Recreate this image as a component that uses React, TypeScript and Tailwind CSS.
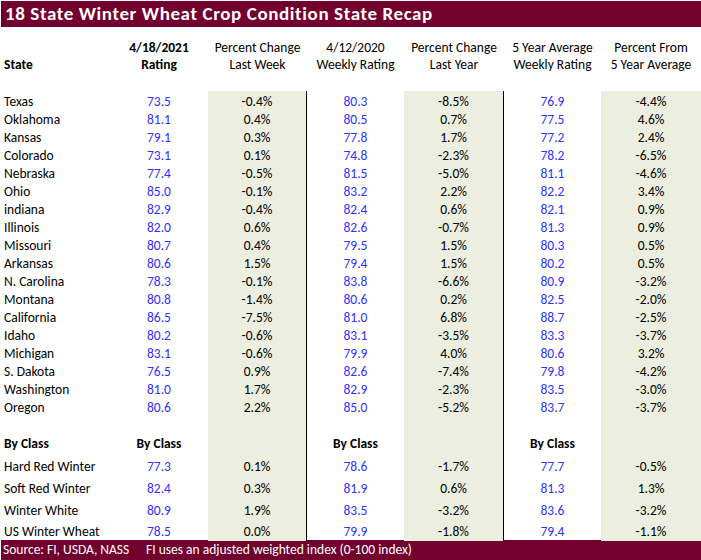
import React from "react";

const FONT = { fontFamily: "Carlito, Calibri, Lato, 'Liberation Sans', sans-serif" };

type Row = [string, string, string, string, string, string, string];

const states: Row[] = [
  ["Texas", "73.5", "-0.4%", "80.3", "-8.5%", "76.9", "-4.4%"],
  ["Oklahoma", "81.1", "0.4%", "80.5", "0.7%", "77.5", "4.6%"],
  ["Kansas", "79.1", "0.3%", "77.8", "1.7%", "77.2", "2.4%"],
  ["Colorado", "73.1", "0.1%", "74.8", "-2.3%", "78.2", "-6.5%"],
  ["Nebraska", "77.4", "-0.5%", "81.5", "-5.0%", "81.1", "-4.6%"],
  ["Ohio", "85.0", "-0.1%", "83.2", "2.2%", "82.2", "3.4%"],
  ["indiana", "82.9", "-0.4%", "82.4", "0.6%", "82.1", "0.9%"],
  ["Illinois", "82.0", "0.6%", "82.6", "-0.7%", "81.3", "0.9%"],
  ["Missouri", "80.7", "0.4%", "79.5", "1.5%", "80.3", "0.5%"],
  ["Arkansas", "80.6", "1.5%", "79.4", "1.5%", "80.2", "0.5%"],
  ["N. Carolina", "78.3", "-0.1%", "83.8", "-6.6%", "80.9", "-3.2%"],
  ["Montana", "80.8", "-1.4%", "80.6", "0.2%", "82.5", "-2.0%"],
  ["California", "86.5", "-7.5%", "81.0", "6.8%", "88.7", "-2.5%"],
  ["Idaho", "80.2", "-0.6%", "83.1", "-3.5%", "83.3", "-3.7%"],
  ["Michigan", "83.1", "-0.6%", "79.9", "4.0%", "80.6", "3.2%"],
  ["S. Dakota", "76.5", "0.9%", "82.6", "-7.4%", "79.8", "-4.2%"],
  ["Washington", "81.0", "1.7%", "82.9", "-2.3%", "83.5", "-3.0%"],
  ["Oregon", "80.6", "2.2%", "85.0", "-5.2%", "83.7", "-3.7%"],
];

const classes: Row[] = [
  ["Hard Red Winter", "77.3", "0.1%", "78.6", "-1.7%", "77.7", "-0.5%"],
  ["Soft Red Winter", "82.4", "0.3%", "81.9", "0.6%", "81.3", "1.3%"],
  ["Winter White", "80.9", "1.9%", "83.5", "-3.2%", "83.6", "-3.2%"],
  ["US Winter Wheat", "78.5", "0.0%", "79.9", "-1.8%", "79.4", "-1.1%"],
];

const GRID = "grid grid-cols-[110px_98px_99px_97px_100px_97px_100px]";
const SHADE = "bg-[#eceedf]";
const BLUE = "text-[#3030ff]";

function DataRow({ r, h }: { r: Row; h: string }) {
  return (
    <div className={`${GRID} ${h} text-[13.5px] leading-[18px] text-black`}>
      <div className="flex items-center pl-[4px] pt-[2px] whitespace-nowrap">{r[0]}</div>
      <div className={`flex items-center justify-center pt-[2px] ${BLUE}`}>{r[1]}</div>
      <div className={`flex items-center justify-center pt-[2px] ${SHADE} border-r border-black`}>{r[2]}</div>
      <div className={`flex items-center justify-center pt-[2px] ${BLUE}`}>{r[3]}</div>
      <div className={`flex items-center justify-center pt-[2px] ${SHADE} border-r border-black`}>{r[4]}</div>
      <div className={`flex items-center justify-center pt-[2px] ${BLUE}`}>{r[5]}</div>
      <div className={`flex items-center justify-center pt-[2px] ${SHADE}`}>{r[6]}</div>
    </div>
  );
}

function Head({ a, b, bold }: { a: string; b: string; bold?: boolean }) {
  return (
    <div className={`flex flex-col items-center whitespace-nowrap ${bold ? "font-bold" : ""}`}>
      <span>{a}</span>
      <span>{b}</span>
    </div>
  );
}

export default function App() {
  return (
    <div className="w-[701px] h-[560px] bg-white overflow-hidden" style={FONT}>
      <div className="pt-[1px] pl-[1px]">
        <div className="h-[26px] bg-[#72002f] text-white font-bold text-[19px] tracking-[0.6px] leading-[26px] pl-[4px] whitespace-nowrap">
          18 State Winter Wheat Crop Condition State Recap
        </div>
      </div>
      <div className={`${GRID} h-[64px] pt-[12px] text-[13.5px] leading-[17px] text-black`}>
        <div className="flex flex-col pl-[4px] font-bold">
          <span>&nbsp;</span>
          <span>State</span>
        </div>
        <Head a="4/18/2021" b="Rating" bold />
        <Head a="Percent Change" b="Last Week" />
        <Head a="4/12/2020" b="Weekly Rating" />
        <Head a="Percent Change" b="Last Year" />
        <Head a="5 Year Average" b="Weekly Rating" />
        <Head a="Percent From" b="5 Year Average" />
      </div>
      {states.map((r) => (
        <DataRow key={r[0]} r={r} h="h-[18px]" />
      ))}
      <DataRow r={["", "", "", "", "", "", ""]} h="h-[18px]" />
      <div className={`${GRID} h-[22px] text-[13.5px] leading-[18px] text-black font-bold`}>
        <div className="flex items-center pl-[4px]">By Class</div>
        <div className="flex items-center justify-center">By Class</div>
        <div className={`${SHADE} border-r border-black`}></div>
        <div className="flex items-center justify-center">By Class</div>
        <div className={`${SHADE} border-r border-black`}></div>
        <div className="flex items-center justify-center">By Class</div>
        <div className={SHADE}></div>
      </div>
      {classes.map((r, i) => (
        <DataRow key={r[0]} r={r} h={i === 3 ? "h-[19px]" : "h-[22px]"} />
      ))}
      <div className="pl-[1px]">
        <div className="h-[20px] bg-[#72002f] text-white text-[13.5px] leading-[20px] flex whitespace-nowrap">
          <span className="pl-[2px] w-[145px]">Source: FI, USDA, NASS</span>
          <span>FI uses an adjusted weighted index (0-100 index)</span>
        </div>
      </div>
    </div>
  );
}
